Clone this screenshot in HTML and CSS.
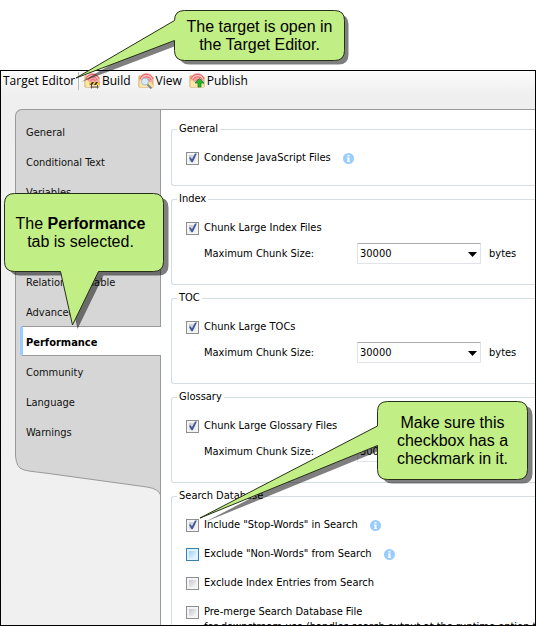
FILE: index.html
```
<!DOCTYPE html>
<html lang="en">
<head>
<meta charset="utf-8">
<title>Target Editor</title>
<link rel="stylesheet" href="styles.css">
</head>
<body>
<svg class="defs" width="0" height="0" aria-hidden="true">
  <symbol id="folder" viewBox="0 0 16 16">
    <path d="M1 3h4l1 1h9v10H1z" fill="#f3d488" stroke="#d3a556"/>
    <path d="M1.5 8 5 6l10 6v2H1.500z" fill="#fae5ab"/>
    <path d="M2 6a6.500 6 0 0 1 13 0v3H5z" fill="#f3a5a5"/>
    <path d="M2 6C3 .5 13-.5 15 6M4 7c1.500-4 8-4.500 9 0M6.500 8c1-2 4-2 5 0" fill="none" stroke="#ec6268" stroke-width="1"/>
    <path d="M3.500 5.500C6 1.500 12 1.500 14 6" fill="none" stroke="#fbdcdc" stroke-width=".7"/>
  </symbol>
  <symbol id="info" viewBox="0 0 11 11">
    <circle cx="5.500" cy="5.500" r="5.500" fill="#99ccff"/>
    <path d="M4.500 2h2v1.500h-2zM4 4.500h2.500V8H7v1H4V8h.5V5.500H4z" fill="#fff"/>
  </symbol>
</svg>

<main class="window">
  <header class="toolbar">
    <span class="toolbar-title">Target Editor</span>
    <button type="button" class="tool">
      <svg viewBox="0 0 16 16"><use href="#folder"/><path d="M5 9h11v3H5z" fill="#f8c43c"/><path d="m6 12 2-3h2l-2 3zm4 0 2-3h2l-2 3z" fill="#333"/><path d="M7.500 12v3.500M13.500 12v3.500M6.500 14h8" stroke="#555" fill="none"/></svg>
      Build
    </button>
    <button type="button" class="tool">
      <svg viewBox="0 0 16 16"><use href="#folder"/><circle cx="7" cy="8.500" r="3.500" fill="#d9eafa" stroke="#a9bbcd"/><path d="m9.500 11.500 4 4" stroke="#888" stroke-width="2"/></svg>
      View
    </button>
    <button type="button" class="tool">
      <svg viewBox="0 0 16 16"><use href="#folder"/><path d="m10.500 5.500 4.500 4.500h-3v4H9v-4H6z" fill="#20b82f" stroke="#148022" stroke-width=".7"/></svg>
      Publish
    </button>
  </header>

  <div class="editor">
    <nav class="sidebar">
      <ul class="tabs">
        <li><a href="#general">General</a></li>
        <li><a href="#conditional">Conditional Text</a></li>
        <li><a href="#variables">Variables</a></li>
        <li class="blank"></li>
        <li class="blank"></li>
        <li><a href="#relationship">Relationship Table</a></li>
        <li><a href="#advanced">Advanced</a></li>
        <li><a class="active" href="#performance" aria-current="page">Performance</a></li>
        <li><a href="#community">Community</a></li>
        <li><a href="#language">Language</a></li>
        <li><a href="#warnings">Warnings</a></li>
      </ul>
      <svg class="sidebar-foot" viewBox="0 0 146 50" preserveAspectRatio="none" aria-hidden="true">
        <path d="M.5 0V10Q1.500 22 8 23.500Q11 25 30 27L132 41Q144 43 145.500 49V0z" fill="#d6d6d6"/>
        <path d="M.5 0V10Q1.500 22 8 23.500Q11 25 30 27L132 41Q144 43 145.500 49V0" fill="none" stroke="#999"/>
      </svg>
    </nav>

    <form class="panel">
      <fieldset>
        <legend>General</legend>
        <div class="row">
          <input type="checkbox" id="condense" checked><label for="condense">Condense JavaScript Files</label>
          <svg class="info"><use href="#info"/></svg>
        </div>
      </fieldset>

      <fieldset>
        <legend>Index</legend>
        <div class="row"><input type="checkbox" id="chunk-index" checked><label for="chunk-index">Chunk Large Index Files</label></div>
        <div class="size-row">
          <label for="size-index">Maximum Chunk Size:</label>
          <span class="combo"><select id="size-index"><option>30000</option></select><svg viewBox="0 0 9 5"><path d="M0 0h9L4.500 5z"/></svg></span>
          <span>bytes</span>
        </div>
      </fieldset>

      <fieldset>
        <legend>TOC</legend>
        <div class="row"><input type="checkbox" id="chunk-toc" checked><label for="chunk-toc">Chunk Large TOCs</label></div>
        <div class="size-row">
          <label for="size-toc">Maximum Chunk Size:</label>
          <span class="combo"><select id="size-toc"><option>30000</option></select><svg viewBox="0 0 9 5"><path d="M0 0h9L4.500 5z"/></svg></span>
          <span>bytes</span>
        </div>
      </fieldset>

      <fieldset>
        <legend>Glossary</legend>
        <div class="row"><input type="checkbox" id="chunk-glossary" checked><label for="chunk-glossary">Chunk Large Glossary Files</label></div>
        <div class="size-row">
          <label for="size-glossary">Maximum Chunk Size:</label>
          <span class="combo"><select id="size-glossary"><option>30000</option></select></span>
        </div>
      </fieldset>

      <fieldset class="search">
        <legend>Search Database</legend>
        <div class="row">
          <input type="checkbox" id="stop-words" checked><label for="stop-words">Include "Stop-Words" in Search</label>
          <svg class="info"><use href="#info"/></svg>
        </div>
        <div class="row">
          <input type="checkbox" class="hot" id="non-words"><label for="non-words">Exclude "Non-Words" from Search</label>
          <svg class="info"><use href="#info"/></svg>
        </div>
        <div class="row"><input type="checkbox" id="index-entries"><label for="index-entries">Exclude Index Entries from Search</label></div>
        <div class="row"><input type="checkbox" id="pre-merge"><label for="pre-merge">Pre-merge Search Database File</label></div>
        <p class="note">for downstream use (handles search output at the runtime option this</p>
      </fieldset>
    </form>
  </div>
</main>

<aside class="callout callout-target">
  <svg viewBox="0 0 171 51" aria-hidden="true">
    <path class="shadow" transform="translate(5 4)" d="M10.500.5h149q10 0 10 10v30q0 10-10 10h-149q-10 0-10-10v-10L-98 68 .5 10.500q0-10 10-10z"/>
    <path class="bubble" d="M10.500.5h150q10 0 10 10v30q0 10-10 10h-150q-10 0-10-10v-10L-98 68 .5 10.500q0-10 10-10z"/>
  </svg>
  <p>The target is open in<br>the Target Editor.</p>
</aside>

<aside class="callout callout-tab">
  <svg viewBox="0 0 161 79" aria-hidden="true">
    <path class="shadow" transform="translate(5 4)" d="M10.500.5h139q10 0 10 10v58q0 10-10 10H94.500L68.500 132 56.500 78.500h-46q-10 0-10-10v-58q0-10 10-10z"/>
    <path class="bubble" d="M10.500.5h139q10 0 10 10v58q0 10-10 10H94.500L68.500 132 56.500 78.500h-46q-10 0-10-10v-58q0-10 10-10z"/>
  </svg>
  <p>The <b>Performance</b><br>tab is selected.</p>
</aside>

<aside class="callout callout-check">
  <svg viewBox="0 0 151 79" aria-hidden="true">
    <path class="shadow" transform="translate(5 4)" d="M10.500.5h130q10 0 10 10v58q0 10-10 10h-130q-10 0-10-10V44.500L-177 117 .5 25v-14.500q0-10 10-10z"/>
    <path class="bubble" d="M10.500.5h130q10 0 10 10v58q0 10-10 10h-130q-10 0-10-10V44.500L-177 117 .5 25v-14.500q0-10 10-10z"/>
  </svg>
  <p>Make sure this<br>checkbox has a<br>checkmark in it.</p>
</aside>
</body>
</html>
```
FILE: styles.css
```
* { box-sizing: border-box; }

body {
  position: relative;
  display: flex;
  flex-direction: column;
  height: 100vh;
  margin: 0;
  padding-top: 70px;
  overflow: hidden;
  background: #fff;
  color: #000;
  font: 11px/14px "DejaVu Sans Condensed", "DejaVu Sans", sans-serif;
}

.defs { position: absolute; }

.window {
  display: flex;
  flex: 1;
  flex-direction: column;
  min-height: 0;
  overflow: hidden;
  border: 1px solid #000;
  background: linear-gradient(#fcfcfc, #efefef 24px, #f0f0f0);
}

.toolbar {
  display: flex;
  flex: none;
  align-items: flex-start;
  height: 38px;
  padding: 1px 2px;
  font: 12px/18px "Open Sans", "Noto Sans", sans-serif;
}

.toolbar-title {
  width: 76px;
  border-right: 1px solid #bbb;
  white-space: nowrap;
}

.tool {
  display: flex;
  align-items: center;
  gap: 2px;
  margin: 0 0 0 5px;
  padding: 0;
  border: 0;
  background: none;
  color: inherit;
  font: inherit;
}

.tool + .tool { margin-left: 7px; }
.tool svg { width: 16px; height: 16px; }

.editor {
  display: flex;
  flex: 1;
  min-height: 0;
  padding-left: 14px;
}

.sidebar {
  z-index: 1;
  flex: none;
  width: 146px;
  margin-right: -1px;
}

.tabs {
  margin: 0;
  padding: 6px 0 0 4px;
  border: 1px solid #999;
  border-width: 1px 1px 0 1px;
  border-radius: 7px 0 0 0;
  background: #d6d6d6;
  list-style: none;
}

.tabs .blank { height: 30px; }

.tabs a {
  display: flex;
  align-items: center;
  height: 30px;
  padding: 3px 0 0 6px;
  color: #111;
  text-decoration: none;
}

.tabs .active {
  margin-right: -1px;
  padding-left: 3px;
  border: 1px solid #999;
  border-width: 1px 0 1px 3px;
  border-left-color: #99ccff;
  border-radius: 3px 0 0 3px;
  background: #fff;
  color: #000;
  font-weight: bold;
}

.sidebar-foot {
  display: block;
  width: 100%;
  height: 50px;
}

.panel {
  flex: 1;
  min-width: 0;
  padding: 12px 0 0 10px;
  overflow: hidden;
  border: 1px solid #999;
  border-width: 1px 0 0 1px;
  background: #fff;
}

fieldset {
  min-width: 0;
  margin: 0 0 6px;
  padding: 15px 0 20px 5px;
  border: 1px solid #d3dde4;
  border-right: 0;
  border-radius: 3px 0 0 3px;
}

legend { padding: 0 2px; }

.row {
  display: flex;
  align-items: center;
  height: 14px;
  padding-left: 9px;
  white-space: nowrap;
}

.row label { margin-left: 5px; }
.search .row + .row { margin-top: 15px; }

.info {
  width: 11px;
  height: 11px;
  margin-left: 12px;
}

input[type="checkbox"] {
  flex: none;
  width: 13px;
  height: 13px;
  margin: 0;
  appearance: none;
  border: 1px solid #8e8f8f;
  background: linear-gradient(135deg, #c4c8cf, #f6f6f6) center / 7px 7px no-repeat, #f4f4f4;
}

input[type="checkbox"]:checked::before {
  display: block;
  width: 11px;
  height: 11px;
  background: #42589a;
  clip-path: polygon(18% 48%, 32% 44%, 45% 62%, 73% 8%, 90% 10%, 52% 88%, 40% 88%);
  content: "";
}

input.hot {
  border-color: #3c7fb1;
  background: linear-gradient(135deg, #9fd4f3, #e9f7fe) center / 7px 7px no-repeat, #def3fd;
}

.size-row {
  display: flex;
  align-items: center;
  margin-top: 8px;
  padding-left: 27px;
  white-space: nowrap;
}

.size-row label { width: 153px; }

.combo {
  position: relative;
  width: 124px;
  height: 21px;
  margin-right: 8px;
}

.combo select {
  width: 100%;
  height: 100%;
  padding: 0 2px;
  appearance: none;
  border: 1px solid #e0e3ea;
  border-top-color: #abadb3;
  border-radius: 1px;
  background: #fff;
  color: #000;
  font: inherit;
}

.combo svg {
  position: absolute;
  top: 9px;
  right: 4px;
  width: 9px;
  height: 5px;
}

.note {
  margin: 1px 0 0 27px;
  white-space: nowrap;
}

.callout {
  position: absolute;
  z-index: 2;
  display: flex;
  align-items: center;
  justify-content: center;
  font: 16px/18px "Liberation Sans", sans-serif;
  text-align: center;
}

.callout svg {
  position: absolute;
  inset: 0;
  width: 100%;
  height: 100%;
  overflow: visible;
}

.callout p {
  position: relative;
  margin: 0;
  white-space: nowrap;
}

.shadow { fill: #000; fill-opacity: .5; }
.bubble { fill: #c2ee86; stroke: #263018; }

.callout-target { top: 10px; left: 174px; width: 171px; height: 51px; }
.callout-tab { top: 193px; left: 4px; width: 161px; height: 79px; padding-right: 8px; }
.callout-check { top: 401px; left: 377px; width: 151px; height: 79px; }
```
